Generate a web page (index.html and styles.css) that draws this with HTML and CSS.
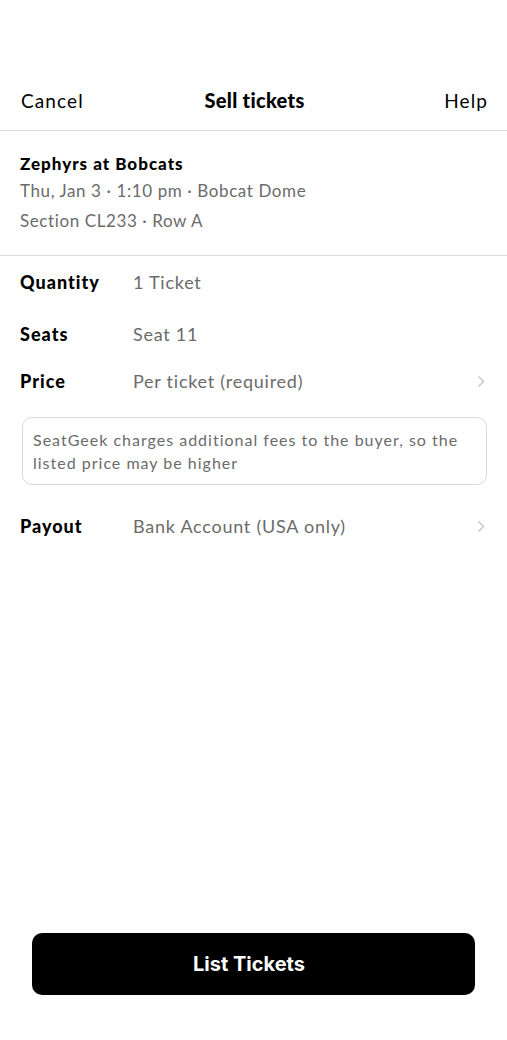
FILE: index.html
```html
<!DOCTYPE html>
<html>
<head>
<meta charset="utf-8">
<link rel="stylesheet" href="styles.css">
</head>
<body>
<div class="screen">
  <header class="nav">
    <span class="nav-link">Cancel</span>
    <span class="nav-title">Sell tickets</span>
    <span class="nav-link">Help</span>
  </header>
  <section class="event">
    <div class="event-title">Zephyrs at Bobcats</div>
    <div class="event-line">Thu, Jan 3 · 1:10 pm · Bobcat Dome</div>
    <div class="event-line">Section CL233 · Row A</div>
  </section>
  <section class="form">
    <div class="row row-qty">
      <span class="label">Quantity</span>
      <span class="value">1 Ticket</span>
    </div>
    <div class="row row-seats">
      <span class="label">Seats</span>
      <span class="value">Seat 11</span>
    </div>
    <div class="row row-price">
      <span class="label">Price</span>
      <span class="value">Per ticket (required)</span>
      <svg class="chev" width="8" height="13" viewBox="0 0 8 13"><path d="M1.5 1.5 L6.5 6.5 L1.5 11.5" fill="none" stroke="#c4c4c4" stroke-width="1.4"/></svg>
    </div>
    <div class="note">SeatGeek charges additional fees to the buyer, so the listed price may be higher</div>
    <div class="row row-payout">
      <span class="label">Payout</span>
      <span class="value">Bank Account (USA only)</span>
      <svg class="chev" width="8" height="13" viewBox="0 0 8 13"><path d="M1.5 1.5 L6.5 6.5 L1.5 11.5" fill="none" stroke="#c4c4c4" stroke-width="1.4"/></svg>
    </div>
  </section>
  <div class="spacer"></div>
  <div class="footer">
    <button class="cta">List Tickets</button>
  </div>
</div>
</body>
</html>
```
FILE: styles.css
```css
html, body {
  margin: 0;
  padding: 0;
  background: #fff;
}
body {
  font-family: "Lato", "Noto Sans", sans-serif;
  color: #000;
}
.screen {
  width: 507px;
  height: 1040px;
  display: flex;
  flex-direction: column;
}
.nav {
  margin-top: 76px;
  height: 48px;
  padding: 0 19px 6px 21px;
  display: flex;
  align-items: center;
  justify-content: space-between;
  border-bottom: 1px solid #dcdcdc;
}
.nav-link {
  font-size: 19px;
  letter-spacing: 1.1px;
  width: 80px;
}
.nav-link:last-child { text-align: right; }
.nav-title {
  font-size: 20px;
  font-weight: 900;
  letter-spacing: 0.3px;
}
.event {
  padding: 21px 20px 19px;
  border-bottom: 1px solid #dcdcdc;
}
.event-title {
  font-size: 17px;
  font-weight: 900;
  line-height: 24px;
  letter-spacing: 1px;
}
.event-line {
  font-size: 17px;
  color: #6b6b6b;
  line-height: 30px;
  letter-spacing: 0.6px;
}
.form {
  padding: 0 20px;
}
.row {
  display: flex;
  align-items: center;
  height: 24px;
}
.row-qty { margin-top: 14px; }
.row-seats { margin-top: 28px; }
.row-price { margin-top: 23px; }
.row-payout { margin-top: 29px; }
.label {
  width: 113px;
  font-size: 18px;
  font-weight: 900;
  letter-spacing: 1px;
}
.value {
  flex: 1;
  font-size: 18px;
  color: #6b6b6b;
  letter-spacing: 0.75px;
}
.chev { margin-right: 2px; }
.note {
  margin: 24px 0 0 2px;
  border: 1px solid #d8d8d8;
  border-radius: 10px;
  padding: 10px 10px 10px;
  font-size: 16px;
  line-height: 23px;
  color: #6b6b6b;
  letter-spacing: 1px;
}
.spacer { flex: 1; }
.footer {
  padding: 0 32px 45px;
}
.cta {
  width: 100%;
  height: 62px;
  border: none;
  border-radius: 10px;
  background: #000;
  color: #fff;
  font-family: "Inter", sans-serif;
  font-size: 20px;
  font-weight: 700;
  padding: 0 9px 0 0;
}
```
